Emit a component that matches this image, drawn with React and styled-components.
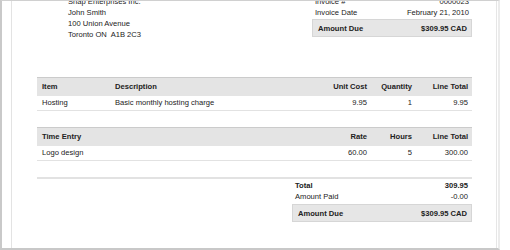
import React from "react";
import styled, { createGlobalStyle } from "styled-components";

const GlobalStyle = createGlobalStyle`
  html, body {
    margin: 0;
    padding: 0;
    background: #ffffff;
  }
  body {
    font-family: "Liberation Sans", Arial, Helvetica, sans-serif;
    font-size: 7.6px;
    color: #222;
  }
`;

const COLS = "73px 190px 71px 45px 56px";

const items = [
  { item: "Hosting", description: "Basic monthly hosting charge", cost: "9.95", qty: "1", total: "9.95" },
];

const timeEntries = [{ name: "Logo design", rate: "60.00", hours: "5", total: "300.00" }];

function App() {
  return (
    <>
      <GlobalStyle />
      <Frame>
        <Page>
          <Content>
            <Header>
              <Address>
                <Line>Snap Enterprises Inc.</Line>
                <Line>John Smith</Line>
                <Line>100 Union Avenue</Line>
                <Line>Toronto ON&nbsp; A1B 2C3</Line>
              </Address>
              <Summary>
                <SummaryRow>
                  <span>Invoice #</span>
                  <span>0000023</span>
                </SummaryRow>
                <SummaryRow>
                  <span>Invoice Date</span>
                  <span>February 21, 2010</span>
                </SummaryRow>
                <DueBox>
                  <span>Amount Due</span>
                  <span>$309.95 CAD</span>
                </DueBox>
              </Summary>
            </Header>

            <Table>
              <HeadCell>Item</HeadCell>
              <HeadCell>Description</HeadCell>
              <HeadCell $right>Unit Cost</HeadCell>
              <HeadCell $right>Quantity</HeadCell>
              <HeadCell $right>Line Total</HeadCell>
              {items.map((row) => (
                <React.Fragment key={row.item}>
                  <Cell>{row.item}</Cell>
                  <Cell>{row.description}</Cell>
                  <Cell $right>{row.cost}</Cell>
                  <Cell $right>{row.qty}</Cell>
                  <Cell $right>{row.total}</Cell>
                </React.Fragment>
              ))}
            </Table>

            <Table $gap>
              <HeadCell $span={2}>Time Entry</HeadCell>
              <HeadCell $right>Rate</HeadCell>
              <HeadCell $right>Hours</HeadCell>
              <HeadCell $right>Line Total</HeadCell>
              {timeEntries.map((row) => (
                <React.Fragment key={row.name}>
                  <Cell $span={2}>{row.name}</Cell>
                  <Cell $right>{row.rate}</Cell>
                  <Cell $right>{row.hours}</Cell>
                  <Cell $right>{row.total}</Cell>
                </React.Fragment>
              ))}
            </Table>

            <Totals>
              <TotalsBlock>
                <TotalRow $bold>
                  <span>Total</span>
                  <span>309.95</span>
                </TotalRow>
                <TotalRow>
                  <span>Amount Paid</span>
                  <span>-0.00</span>
                </TotalRow>
                <DueBox $wide>
                  <span>Amount Due</span>
                  <span>$309.95 CAD</span>
                </DueBox>
              </TotalsBlock>
            </Totals>
          </Content>
        </Page>
      </Frame>
    </>
  );
}

const Frame = styled.div`
  box-sizing: border-box;
  width: 500px;
  height: 250px;
  overflow: hidden;
  border-left: 2px solid #c9c9c9;
  border-right: 2px solid #ececec;
  border-top: 1px solid #d0d0d0;
  border-bottom: 2px solid #c8c8c8;
  display: flex;
`;

const Page = styled.div`
  box-sizing: border-box;
  margin-left: 9px;
  margin-right: 1px;
  flex: 1;
  border-left: 1px solid #e3e3e3;
  border-right: 1px solid #e6e6e6;
`;

const Content = styled.div`
  margin-top: -5px;
  padding-left: 25px;
  width: 435px;
`;

const Header = styled.div`
  display: flex;
  align-items: flex-start;
`;

const Address = styled.div`
  padding-left: 31px;
`;

const Line = styled.div`
  height: 11px;
  line-height: 11px;
  white-space: nowrap;
`;

const Summary = styled.div`
  margin-left: auto;
  width: 160px;
`;

const SummaryRow = styled.div`
  display: flex;
  justify-content: space-between;
  height: 11px;
  line-height: 11px;
  padding: 0 3px;
`;

const DueBox = styled.div`
  box-sizing: border-box;
  display: flex;
  justify-content: space-between;
  align-items: center;
  height: 18px;
  margin-top: ${(p) => (p.$wide ? "2px" : "1px")};
  padding: 0 4px 0 5px;
  background: #e6e6e6;
  border: 1px solid #d6d6d6;
  font-weight: bold;
`;

const Table = styled.div`
  display: grid;
  grid-template-columns: ${COLS};
  margin-top: ${(p) => (p.$gap ? "16px" : "37px")};
`;

const HeadCell = styled.div`
  box-sizing: border-box;
  grid-column: span ${(p) => p.$span || 1};
  height: 19px;
  line-height: 18px;
  padding: 0 4px 0 5px;
  background: #e4e4e4;
  border-top: 1px solid #cbcbcb;
  font-weight: bold;
  text-align: ${(p) => (p.$right ? "right" : "left")};
  white-space: nowrap;
`;

const Cell = styled.div`
  box-sizing: border-box;
  grid-column: span ${(p) => p.$span || 1};
  height: 15px;
  line-height: 14px;
  padding: 0 4px 0 5px;
  border-bottom: 1px solid #e2e2e2;
  text-align: ${(p) => (p.$right ? "right" : "left")};
  white-space: nowrap;
`;

const Totals = styled.div`
  margin-top: 16px;
  border-top: 2px solid #e2e2e2;
  padding-top: 1px;
  display: flex;
  justify-content: flex-end;
`;

const TotalsBlock = styled.div`
  width: 180px;
`;

const TotalRow = styled.div`
  display: flex;
  justify-content: space-between;
  height: 11px;
  line-height: 11px;
  padding: 0 4px 0 3px;
  font-weight: ${(p) => (p.$bold ? "bold" : "normal")};
`;

export default App;
